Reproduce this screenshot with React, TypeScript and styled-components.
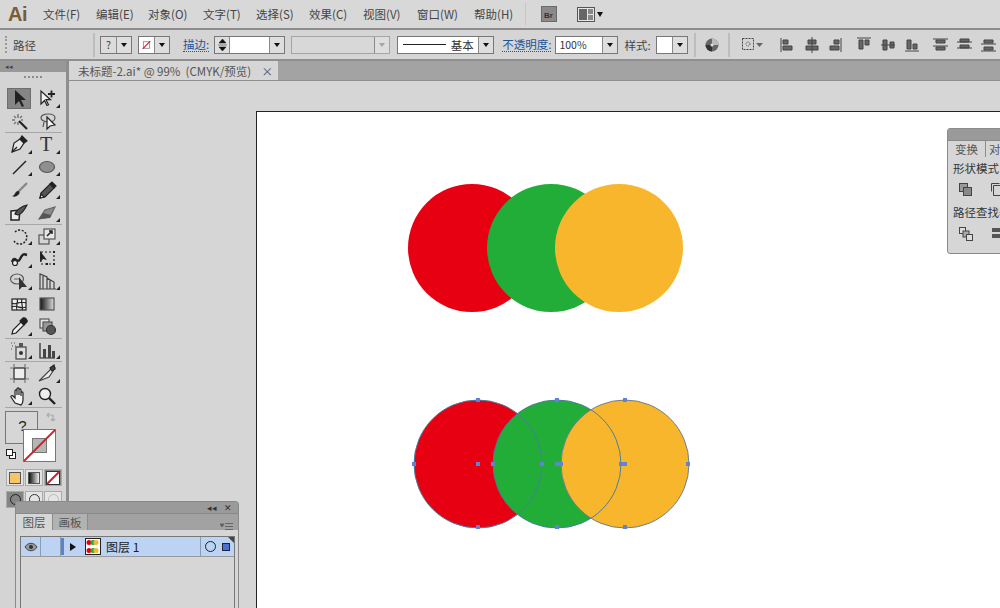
import React from "react";
import styled, { createGlobalStyle } from "styled-components";

const Global = createGlobalStyle`
  html, body { margin: 0; padding: 0; background: #d6d6d6; }
  body { font-family: "Noto Sans CJK SC", "Liberation Sans", sans-serif; color: #3c3c3c; }
`;

const Page = styled.div`
  position: relative;
  width: 1000px;
  height: 608px;
  overflow: hidden;
  display: flex;
  flex-direction: column;
`;

const MenuBar = styled.div`
  height: 28px;
  flex: none;
  display: flex;
  align-items: center;
  background: #d8d8d8;
  border-bottom: 2px solid #8c8c8c;
`;

const Logo = styled.div`
  width: 43px;
  padding-left: 8px;
  box-sizing: border-box;
  font: bold 20px "Liberation Sans", sans-serif;
  color: #7b5c38;
  letter-spacing: -0.5px;
`;

const MenuItem = styled.div<{ $w: number }>`
  width: ${(p) => p.$w}px;
  font-size: 11.5px;
  color: #444;
  white-space: nowrap;
`;

const MenuSep = styled.div`
  width: 1px;
  height: 22px;
  background: #c4c4c4;
  margin: 0 15px 0 0;
`;

const ControlBar = styled.div`
  height: 29px;
  flex: none;
  display: flex;
  align-items: center;
  background: #d5d5d5;
  border-bottom: 2px solid #8f8f8f;
  font-size: 11.5px;
`;

const Gap = styled.div<{ $w: number }>`
  width: ${(p) => p.$w}px;
  flex: none;
`;

const Grip = styled.div`
  width: 2px;
  height: 17px;
  margin-left: 5px;
  flex: none;
  border-left: 2px dotted #999;
`;

const BarLabel = styled.div<{ $link?: boolean }>`
  flex: none;
  white-space: nowrap;
  color: ${(p) => (p.$link ? "#22549c" : "#444")};
  ${(p) => p.$link && "border-bottom: 1px dotted #22549c; line-height: 14px;"}
`;

const VSep = styled.div`
  width: 2px;
  height: 24px;
  flex: none;
  background: #bdbdbd;
`;

const Combo = styled.div<{ $w: number; $off?: boolean }>`
  width: ${(p) => p.$w}px;
  height: 18px;
  flex: none;
  box-sizing: border-box;
  display: flex;
  align-items: stretch;
  background: ${(p) => (p.$off ? "#d8d8d8" : "#fff")};
  border: 1px solid ${(p) => (p.$off ? "#a5a5a5" : "#777")};
  font-size: 10.5px;
`;

const ComboBody = styled.div<{ $start?: boolean; $shade?: boolean }>`
  flex: 1;
  min-width: 0;
  display: flex;
  align-items: center;
  justify-content: ${(p) => (p.$start ? "flex-start" : "center")};
  padding: 0 3px;
  white-space: nowrap;
  color: #333;
  ${(p) => p.$shade && "background: #dcdcdc;"}
`;

const Drop = styled.div<{ $off?: boolean }>`
  width: 14px;
  flex: none;
  display: flex;
  align-items: center;
  justify-content: center;
  background: #dedede;
  border-left: 1px solid #8a8a8a;
  &::after {
    content: "";
    border-left: 3.5px solid transparent;
    border-right: 3.5px solid transparent;
    border-top: 4px solid ${(p) => (p.$off ? "#a5a5a5" : "#111")};
  }
`;

const Spin = styled.div`
  width: 14px;
  flex: none;
  background: #dedede;
  border-right: 1px solid #8a8a8a;
  display: flex;
  align-items: center;
  justify-content: center;
`;

const LineSample = styled.div`
  width: 43px;
  height: 1px;
  background: #222;
  margin-right: 5px;
  flex: none;
`;

const Basic = styled.span`
  font-size: 11.5px;
`;

const BarIcon = styled.svg`
  flex: none;
  display: block;
`;

const DocTab = styled.div`
  width: 209px;
  height: 19px;
  box-sizing: border-box;
  display: flex;
  align-items: center;
  justify-content: space-between;
  padding: 0 5px 0 9px;
  background: #d6d6d6;
  font-size: 11.5px;
  color: #555;
  white-space: pre;
`;

const Workspace = styled.div`
  flex: 1;
  min-height: 0;
  display: flex;
`;

const ToolPanel = styled.div`
  width: 69px;
  flex: none;
  box-sizing: border-box;
  background: #d4d4d4;
  border-right: 3px solid #8e8e8e;
`;

const ToolHead = styled.div`
  height: 11px;
  background: #989898;
  color: #444;
  font-size: 7px;
  line-height: 10px;
  padding-left: 5px;
`;

const ToolGrip = styled.div`
  height: 15px;
  display: flex;
  justify-content: center;
  padding-top: 4px;
  box-sizing: border-box;
  &::before {
    content: "";
    width: 18px;
    height: 2px;
    border-top: 2px dotted #8a8a8a;
  }
`;

const ToolGrid = styled.div`
  display: grid;
  grid-template-columns: 28px 28px;
  grid-auto-rows: 22.6px;
  padding-left: 5px;
`;

const ToolRule = styled.div`
  height: 1px;
  margin: 0 4px 0 5px;
  background: #a8a8a8;
`;

const Tool = styled.div<{ $on?: boolean; $more?: boolean }>`
  position: relative;
  display: flex;
  align-items: center;
  justify-content: center;
  ${(p) => p.$on && "background: #858585; box-shadow: inset 0 0 0 1px #6e6e6e; margin: 1px 2px 1px 2px;"}
  ${(p) =>
    p.$more &&
    `&::after {
      content: "";
      position: absolute;
      right: 1px;
      bottom: 2px;
      border-left: 4px solid transparent;
      border-bottom: 4px solid #222;
    }`}
`;

const Swatches = styled.div`
  position: relative;
  height: 61px;
`;

const FillBox = styled.div`
  position: absolute;
  left: 5px;
  top: 3px;
  width: 33px;
  height: 33px;
  box-sizing: border-box;
  border: 1px solid #777;
  background: #d6d6d6;
  font: 15px "Liberation Sans", sans-serif;
  text-align: center;
  padding-top: 5px;
  padding-left: 2px;
  color: #222;
`;

const StrokeBox = styled.svg`
  position: absolute;
  left: 23px;
  top: 21px;
`;

const SwapIcon = styled.svg`
  position: absolute;
  left: 46px;
  top: 4px;
`;

const DefaultIcon = styled.svg`
  position: absolute;
  left: 6px;
  top: 41px;
`;

const ModeRow = styled.div`
  display: flex;
  gap: 1px;
  margin-left: 6px;
  margin-bottom: 5px;
`;

const ModeBtn = styled.div<{ $on?: boolean }>`
  width: 18px;
  height: 17px;
  display: flex;
  align-items: center;
  justify-content: center;
  background: ${(p) => (p.$on ? "#858585" : "#e4e4e4")};
  box-shadow: inset 0 0 0 1px #aaa;
`;

const Swatch = styled.div<{ $bg: string }>`
  width: 12px;
  height: 12px;
  box-sizing: border-box;
  border: 1px solid #555;
  background: ${(p) => p.$bg};
`;

const ScreenRing = styled.div<{ $c: string }>`
  width: 9px;
  height: 9px;
  margin-bottom: 1px;
  border: 1.5px solid ${(p) => p.$c};
  border-radius: 50%;
`;

const Document = styled.div`
  flex: 1;
  min-width: 0;
  display: flex;
  flex-direction: column;
`;

const TabStrip = styled.div`
  height: 19px;
  flex: none;
  display: flex;
  background: #a3a3a3;
  border-bottom: 1px solid #8f8f8f;
`;

const Canvas = styled.div`
  flex: 1;
  min-height: 0;
  background: #d6d6d6;
  padding: 30px 0 0 187px;
`;

const Artboard = styled.div`
  height: 100%;
  background: #fff;
  border-left: 1px solid #222;
  border-top: 1px solid #222;
`;

const ArtSvg = styled.svg`
  display: block;
`;

const Panel = styled.div`
  position: absolute;
  box-sizing: border-box;
  background: #d6d6d6;
  border: 1px solid #8a8a8a;
  font-size: 11px;
`;

const LayersPanel = styled(Panel)`
  left: 15px;
  top: 501px;
  width: 224px;
  height: 120px;
  border-radius: 3px 3px 0 0;
`;

const SwatchPanel = styled(Panel)`
  left: 947px;
  top: 128px;
  width: 70px;
  height: 126px;
  border-radius: 3px 0 0 3px;
`;

const PanelHead = styled.div`
  height: 11px;
  background: #9a9a9a;
  border-bottom: 1px solid #8a8a8a;
  display: flex;
  align-items: center;
  justify-content: flex-end;
  gap: 7px;
  padding-right: 6px;
  font: 9px "Liberation Sans", sans-serif;
  color: #333;
`;

const PanelTabs = styled.div`
  height: 16px;
  display: flex;
  background: #a2a2a2;
`;

const PanelTab = styled.div<{ $on?: boolean; $w: number }>`
  width: ${(p) => p.$w}px;
  flex: none;
  display: flex;
  align-items: center;
  justify-content: center;
  background: ${(p) => (p.$on ? "#d6d6d6" : "#b2b2b2")};
  border-right: 1px solid #8c8c8c;
  box-sizing: border-box;
  color: #555;
  font-size: 11.5px;
  overflow: hidden;
  white-space: nowrap;
`;

const PanelMenu = styled.div`
  margin-left: auto;
  padding: 4px 5px 0 0;
`;

const LayerList = styled.div`
  margin: 6px 3px 0 4px;
  border: 1px solid #777;
  height: 90px;
`;

const LayerRow = styled.div`
  position: relative;
  height: 19px;
  display: flex;
  align-items: center;
  background: #bcd3f3;
  border-bottom: 1px solid #9a9a9a;
`;

const LayerCell = styled.div<{ $w: number }>`
  width: ${(p) => p.$w}px;
  flex: none;
  height: 100%;
  box-sizing: border-box;
  border-right: 1px solid #8d9bb0;
  display: flex;
  align-items: center;
  justify-content: center;
`;

const ColorBar = styled.div`
  width: 3px;
  height: 17px;
  flex: none;
  background: #5a84d0;
`;

const Expand = styled.div`
  margin-left: 6px;
  flex: none;
  border-left: 6px solid #111;
  border-top: 4px solid transparent;
  border-bottom: 4px solid transparent;
`;

const LayerName = styled.div`
  flex: 1;
  margin-left: 5px;
  font-size: 12px;
  color: #222;
  white-space: nowrap;
`;

const Target = styled.div`
  width: 34px;
  height: 100%;
  flex: none;
  box-sizing: border-box;
  border-left: 1px solid #8d9bb0;
  display: flex;
  align-items: center;
  gap: 6px;
  padding-left: 4px;
`;

const Ring = styled.div`
  width: 9px;
  height: 9px;
  border: 1px solid #222;
  border-radius: 50%;
`;

const Selected = styled.div`
  width: 6px;
  height: 6px;
  background: #4c6fd6;
  border: 1px solid #223;
`;

const Corner = styled.div`
  position: absolute;
  right: 0;
  top: 0;
  border-left: 6px solid transparent;
  border-top: 6px solid #444;
`;

const PathBody = styled.div`
  padding: 3px 0 0 5px;
  font-size: 11.5px;
  color: #333;
  white-space: nowrap;
`;

const PathRow = styled.div`
  display: flex;
  gap: 19px;
  padding: 7px 0 8px 6px;
`;

const Shape = styled.svg`
  flex: none;
  display: block;
`;

const menus: [string, number][] = [
  ["文件(F)", 53],
  ["编辑(E)", 52],
  ["对象(O)", 55],
  ["文字(T)", 53],
  ["选择(S)", 53],
  ["效果(C)", 54],
  ["视图(V)", 54],
  ["窗口(W)", 57],
  ["帮助(H)", 51],
];

const S = ({ children, w = 20, h = 20 }: { children: React.ReactNode; w?: number; h?: number }) => (
  <svg width={w} height={h} viewBox={`0 0 ${w} ${h}`} fill="none" stroke="#222" strokeWidth="1.2">
    {children}
  </svg>
);

const icons: Record<string, React.ReactNode> = {
  select: <path d="M6 2v15l4-4 3 6 2-1-3-6h5z" fill="#222" stroke="none" />,
  direct: (
    <>
      <path d="M4 3v13l3.500-3.500 2.500 5 1.500-.8-2.500-5h4.500z" fill="#f2f2f2" />
      <path d="M11 6h7M14.500 2.500v7" strokeWidth="1.800" />
    </>
  ),
  wand: (
    <>
      <path d="M10 10l8 8" strokeWidth="2.200" />
      <path d="M9 3v4M9 11v3M3 9h3M12 9h2M5 5l2 2M5 13l2-2M13 5l-2 2" stroke="#777" strokeWidth="1.500" />
    </>
  ),
  lasso: (
    <>
      <path d="M4 7c0-3 4-4 7-4s7 1 7 4-4 5-8 4-6-2-6-4zM7 11l-1 5" stroke="#555" />
      <path d="M10 6v12l3-3 5-1z" fill="#f2f2f2" />
    </>
  ),
  pen: (
    <>
      <path d="M3 18l2-9 6-4 4 4-4 6z" fill="#e6e6e6" />
      <path d="M11 5l2-3 5 5-3 2z" fill="#222" />
      <path d="M3 18l5-5" />
    </>
  ),
  type: <text x="3" y="17" fontFamily="Liberation Serif" fontSize="20" fill="#333" stroke="none">T</text>,
  line: <path d="M4 17L17 4" strokeWidth="1.500" />,
  ellipse: <ellipse cx="10" cy="10" rx="7.500" ry="5.500" fill="#8f8f8f" stroke="#555" />,
  brush: (
    <>
      <path d="M9 12L18 3" stroke="#888" strokeWidth="2.400" />
      <path d="M3 16c3 0 3-5 6-5 2 0 2 3 0 4-2 2-4 2-6 1z" fill="#222" stroke="none" />
    </>
  ),
  pencil: (
    <>
      <path d="M3 18l1-5 9-9 4 4-9 9z" fill="#555" />
      <path d="M3 18l1-4 3 3z" fill="#eee" />
      <path d="M13 4l2-2 4 4-2 2z" fill="#222" />
    </>
  ),
  blob: (
    <>
      <path d="M2 9l9-1-1 10H2z" fill="#eee" strokeWidth="1.500" />
      <path d="M6 12c1-4 7-8 12-9-2 4-5 9-9 10z" fill="#555" stroke="#222" />
    </>
  ),
  eraser: (
    <>
      <path d="M2 17l6-9 10-3-5 10z" fill="#8a8a8a" stroke="#666" />
      <path d="M2 17l4-6 8 2-1 3z" fill="#555" stroke="none" />
    </>
  ),
  rotate: <path d="M6 6a7 7 0 1 1-1 9" strokeDasharray="2 1.500" strokeWidth="1.500" />,
  scale: (
    <>
      <rect x="2" y="9" width="10" height="9" stroke="#555" />
      <rect x="7" y="3" width="11" height="10" fill="#e6e6e6" stroke="#555" />
      <path d="M10 10l5-5M12 5h3v3" strokeWidth="1.500" />
    </>
  ),
  warp: (
    <>
      <path d="M3 14c3-8 5 3 8-3s4-5 7-4" strokeWidth="2.400" />
      <circle cx="6" cy="15" r="2.500" fill="#eee" />
    </>
  ),
  free: (
    <>
      <rect x="4" y="4" width="13" height="12" strokeDasharray="2 2" />
      <path d="M3 3v11l3-3 4 1z" fill="#222" stroke="none" />
      <path d="M16 3h2v2h-2zM16 15h2v2h-2zM9 15h2v2H9z" fill="#222" stroke="none" />
    </>
  ),
  builder: (
    <>
      <ellipse cx="8" cy="8" rx="6.500" ry="5" stroke="#555" />
      <path d="M5 8h6" stroke="#777" />
      <path d="M10 6v13l3-3 5 0z" fill="#333" stroke="none" />
    </>
  ),
  perspective: <path d="M3 18V3l7 3v12M10 7l7 4v7M6 5v13M13 9v9M2 18h17" stroke="#444" />,
  mesh: (
    <>
      <rect x="3" y="5" width="14" height="11" fill="#eee" />
      <path d="M3 9c4 3 7-3 14 0M3 13c4-3 8 3 14 0M8 5c2 3-2 7 0 11M13 5c-2 4 2 7 0 11" />
    </>
  ),
  gradient: (
    <>
      <defs>
        <linearGradient id="gr">
          <stop offset="0" stopColor="#111" />
          <stop offset="1" stopColor="#ddd" />
        </linearGradient>
      </defs>
      <rect x="3" y="4" width="14" height="12" fill="url(#gr)" stroke="#555" />
    </>
  ),
  dropper: (
    <>
      <path d="M3 18l1-4 8-8 3 3-8 8z" fill="#eee" />
      <path d="M11 5l3-3c2-1 5 2 4 4l-3 3z" fill="#222" />
    </>
  ),
  blend: (
    <>
      <rect x="3" y="3" width="9" height="9" fill="#e6e6e6" stroke="#555" />
      <rect x="6" y="6" width="9" height="9" fill="#999" stroke="#555" />
      <circle cx="14" cy="14" r="4.500" fill="#555" stroke="#333" />
    </>
  ),
  spray: (
    <>
      <rect x="7" y="7" width="10" height="12" fill="#ddd" stroke="#444" />
      <rect x="10" y="3" width="4" height="4" fill="#555" stroke="none" />
      <circle cx="12" cy="13" r="2" fill="#333" stroke="none" />
      <path d="M2 3h1M5 3h1M3 6h1M6 6h1M2 9h1" strokeDasharray="1 1" stroke="#555" />
    </>
  ),
  graph: (
    <>
      <path d="M3 3v15h15" />
      <path d="M6 9h3v9H6zM11 5h3v13h-3zM15 11h3v7h-3z" fill="#444" stroke="none" />
    </>
  ),
  artboard: (
    <>
      <rect x="5" y="5" width="11" height="11" fill="#eee" />
      <path d="M5 1v3M16 1v3M5 17v3M16 17v3M1 5h3M1 16h3M17 5h3M17 16h3" stroke="#777" />
    </>
  ),
  slice: (
    <>
      <path d="M2 18L16 4l2 1-6 9z" fill="#eee" stroke="#444" />
      <path d="M13 5l4-3 1 4-3 2z" fill="#444" />
    </>
  ),
  hand: (
    <path
      d="M6 17l-4-6c-.6-1.200 1-2 2-1l2 2V5c0-1.500 2-1.500 2 0v4-6c0-1.500 2-1.500 2 0v6-5c0-1.500 2-1.500 2 0v6-3c0-1.500 2-1.500 2 0v7c0 2-1 4-2 5z"
      fill="#f4f4f4"
    />
  ),
  zoom: (
    <>
      <circle cx="8" cy="8" r="5.500" fill="#eee" strokeWidth="1.400" />
      <path d="M12 12l6 6" strokeWidth="2.400" />
    </>
  ),
};

type T = [string, boolean];
const sections: T[][] = [
  [["select", false], ["direct", true], ["wand", false], ["lasso", false]],
  [["pen", true], ["type", true], ["line", true], ["ellipse", true], ["brush", false], ["pencil", true], ["blob", false], ["eraser", true]],
  [["rotate", true], ["scale", true], ["warp", true], ["free", false], ["builder", true], ["perspective", true], ["mesh", false], ["gradient", false], ["dropper", true], ["blend", false]],
  [["spray", true], ["graph", true]],
  [["artboard", false], ["slice", true], ["hand", true], ["zoom", false]],
];

const alignIcons = [
  "M1 1v14M3 3h5v4H3zM3 9h9v4H3z",
  "M7 0v16M3 3h8v4H3zM1 9h12v4H1z",
  "M13 1v14M6 3h5v4H6zM2 9h9v4H2z",
  "M0 1h14M2 3h4v9H2zM8 3h4v5H8z",
  "M0 8h14M2 3h4v10H2zM9 5h4v6H9z",
  "M0 14h14M2 3h4v9H2zM8 7h4v5H8z",
  "M0 2h15M0 9h15M3 3h9v3H3zM3 10h9v3H3z",
  "M0 5h15M0 11h15M3 2h9v3H3zM3 8h9v3H3z",
  "M0 7h15M0 14h15M3 3h9v3H3zM3 10h9v3H3z",
];
const alignGaps = [17, 10, 8, 14, 9, 9, 13, 9, 9];

const anchors: [number, number][] = [
  [478, 400], [414, 464], [478, 464], [542, 464], [478, 527],
  [557, 400], [493, 464], [557, 464], [621, 464], [557, 527],
  [625, 400], [561, 464], [625, 464], [688, 464], [625, 527], [559, 464], [622, 464],
];

const Art = () => (
  <ArtSvg width="743" height="496" viewBox="257 112 743 496">
    <circle cx="472" cy="248" r="64" fill="#e60012" />
    <circle cx="551" cy="248" r="64" fill="#22ac38" />
    <circle cx="619" cy="248" r="64" fill="#f8b62d" />
    <circle cx="478" cy="464" r="64" fill="#e60012" />
    <circle cx="557" cy="464" r="64" fill="#22ac38" />
    <circle cx="625" cy="464" r="64" fill="#f8b62d" />
    <g fill="none" stroke="#4a7f9c" strokeWidth="1">
      <circle cx="478" cy="464" r="64" />
      <circle cx="557" cy="464" r="64" />
      <circle cx="625" cy="464" r="64" stroke="#6f7f8c" />
    </g>
    <g fill="#5f83d6">
      {anchors.map(([x, y], i) => (
        <rect key={i} x={x - 2} y={y - 2} width="4" height="4" />
      ))}
    </g>
  </ArtSvg>
);

export default function App() {
  return (
    <Page>
      <Global />
      <MenuBar>
        <Logo>Ai</Logo>
        {menus.map(([m, w]) => (
          <MenuItem key={m} $w={w}>{m}</MenuItem>
        ))}
        <MenuSep />
        <BarIcon width="16" height="16" viewBox="0 0 16 16">
          <rect x="0.500" y="0.500" width="15" height="15" fill="#8a8a8a" stroke="#6b6b6b" />
          <text x="3" y="11.500" fontSize="8" fontFamily="Liberation Sans" fontWeight="bold" fill="#333">Br</text>
        </BarIcon>
        <Gap $w={20} />
        <BarIcon width="27" height="15" viewBox="0 0 27 15">
          <rect x="0.500" y="0.500" width="17" height="14" fill="#e6e6e6" stroke="#555" />
          <rect x="2" y="2" width="8" height="11" fill="#666" />
          <rect x="11" y="2" width="5" height="5" fill="#888" />
          <rect x="11" y="8" width="5" height="5" fill="#888" />
          <path d="M20 5h6l-3 5z" fill="#111" />
        </BarIcon>
      </MenuBar>
      <ControlBar>
        <Grip />
        <Gap $w={4} />
        <BarLabel>路径</BarLabel>
        <Gap $w={57} />
        <VSep />
        <Gap $w={5} />
        <Combo $w={32}>
          <ComboBody $shade>?</ComboBody>
          <Drop />
        </Combo>
        <Gap $w={6} />
        <Combo $w={32}>
          <ComboBody>
            <svg width="14" height="14" viewBox="0 0 14 14">
              <rect x="2" y="2" width="10" height="10" fill="#fff" stroke="#666" />
              <path d="M1 13L13 1" stroke="#d0202a" strokeWidth="1.800" />
            </svg>
          </ComboBody>
          <Drop />
        </Combo>
        <Gap $w={13} />
        <BarLabel $link>描边:</BarLabel>
        <Gap $w={5} />
        <Combo $w={71}>
          <Spin>
            <svg width="9" height="12" viewBox="0 0 9 12">
              <path d="M4.500 0l3.500 4H1zM4.500 12L1 8h7zM0 6h9" fill="#111" stroke="#111" strokeWidth="0.500" />
            </svg>
          </Spin>
          <ComboBody />
          <Drop />
        </Combo>
        <Gap $w={6} />
        <Combo $w={99} $off>
          <ComboBody />
          <Drop $off />
        </Combo>
        <Gap $w={7} />
        <Combo $w={97}>
          <ComboBody>
            <LineSample />
            <Basic>基本</Basic>
          </ComboBody>
          <Drop />
        </Combo>
        <Gap $w={8} />
        <BarLabel $link>不透明度:</BarLabel>
        <Gap $w={4} />
        <Combo $w={63}>
          <ComboBody $start>100%</ComboBody>
          <Drop />
        </Combo>
        <Gap $w={6} />
        <BarLabel>样式:</BarLabel>
        <Gap $w={5} />
        <Combo $w={32}>
          <ComboBody />
          <Drop />
        </Combo>
        <Gap $w={6} />
        <VSep />
        <Gap $w={9} />
        <BarIcon width="14" height="14" viewBox="0 0 14 14">
          <circle cx="7" cy="7" r="6.500" fill="#666" />
          <path d="M7 7L7 .5A6.500 6.500 0 0 1 13.500 7z" fill="#bbb" />
          <path d="M7 7L.5 7A6.500 6.500 0 0 0 7 13.500z" fill="#333" />
          <circle cx="7" cy="7" r="1.500" fill="#ddd" />
        </BarIcon>
        <Gap $w={9} />
        <VSep />
        <Gap $w={12} />
        <BarIcon width="21" height="13" viewBox="0 0 21 13">
          <rect x="0.500" y="0.500" width="11" height="11" fill="none" stroke="#444" strokeDasharray="2 1" />
          <circle cx="6" cy="6" r="2" fill="none" stroke="#444" strokeDasharray="1 1" />
          <path d="M14 5h7l-3.500 4z" fill="#666" />
        </BarIcon>
        {alignIcons.map((d, i) => (
          <React.Fragment key={i}>
            <Gap $w={alignGaps[i]} />
            <BarIcon width="15" height="16" viewBox="0 0 15 16">
              <path d={d} fill="#666" stroke="#444" strokeWidth="1" />
            </BarIcon>
          </React.Fragment>
        ))}
      </ControlBar>
      <Workspace>
        <ToolPanel>
          <ToolHead>◂◂</ToolHead>
          <ToolGrip />
          {sections.map((sec, i) => (
            <React.Fragment key={i}>
              <ToolGrid>
                {sec.map(([name, more]) => (
                  <Tool key={name} $on={name === "select"} $more={more}>
                    <S>{icons[name]}</S>
                  </Tool>
                ))}
              </ToolGrid>
              <ToolRule />
            </React.Fragment>
          ))}
          <Swatches>
            <FillBox>?</FillBox>
            <StrokeBox width="33" height="33" viewBox="0 0 33 33">
              <rect x="0.500" y="0.500" width="32" height="32" fill="#fff" stroke="#777" />
              <rect x="9.500" y="9.500" width="14" height="14" fill="#b5b5b5" stroke="#777" />
              <path d="M1 32L32 1" stroke="#cf2027" strokeWidth="1.800" />
            </StrokeBox>
            <SwapIcon width="10" height="10" viewBox="0 0 10 10">
              <path d="M1 3h6v6M1 3l2-2M1 3l2 2M7 9L5 7M7 9l2-2" fill="none" stroke="#aaa" strokeWidth="1.200" />
            </SwapIcon>
            <DefaultIcon width="10" height="10" viewBox="0 0 10 10">
              <rect x="3.500" y="3.500" width="6" height="6" fill="#fff" stroke="#222" />
              <rect x="0.500" y="0.500" width="6" height="6" fill="#fff" stroke="#222" />
            </DefaultIcon>
          </Swatches>
          <ModeRow>
            <ModeBtn>
              <Swatch $bg="#f6c56a" />
            </ModeBtn>
            <ModeBtn>
              <Swatch $bg="linear-gradient(90deg, #111, #eee)" />
            </ModeBtn>
            <ModeBtn $on>
              <svg width="14" height="14" viewBox="0 0 14 14">
                <rect x="0.500" y="0.500" width="13" height="13" fill="#fff" stroke="#333" />
                <path d="M1 13L13 1" stroke="#cf2027" strokeWidth="2" />
              </svg>
            </ModeBtn>
          </ModeRow>
          <ModeRow>
            <ModeBtn $on>
              <ScreenRing $c="#222" />
            </ModeBtn>
            <ModeBtn>
              <ScreenRing $c="#333" />
            </ModeBtn>
            <ModeBtn>
              <ScreenRing $c="#bbb" />
            </ModeBtn>
          </ModeRow>
        </ToolPanel>
        <Document>
          <TabStrip>
            <DocTab>
              {"未标题-2.ai* @ 99%  (CMYK/预览)"}
              <span>×</span>
            </DocTab>
          </TabStrip>
          <Canvas>
            <Artboard>
              <Art />
            </Artboard>
          </Canvas>
        </Document>
      </Workspace>

      <LayersPanel>
        <PanelHead>
          <span>◂◂</span>
          <span>✕</span>
        </PanelHead>
        <PanelTabs>
          <PanelTab $on $w={37}>图层</PanelTab>
          <PanelTab $w={35}>画板</PanelTab>
          <PanelMenu>
            <svg width="13" height="8" viewBox="0 0 13 8">
              <path d="M0 1h4L2 4zM5 .5h8M5 3.500h8M5 6.500h8" fill="#555" stroke="#666" />
            </svg>
          </PanelMenu>
        </PanelTabs>
        <LayerList>
          <LayerRow>
            <LayerCell $w={20}>
              <svg width="14" height="10" viewBox="0 0 14 10">
                <path d="M1 5c3-5 9-5 12 0-3 5-9 5-12 0z" fill="#999" stroke="#444" />
                <circle cx="7" cy="5" r="2" fill="#333" />
              </svg>
            </LayerCell>
            <LayerCell $w={20} />
            <ColorBar />
            <Expand />
            <Gap $w={9} />
            <svg width="16" height="17" viewBox="0 0 16 17">
              <rect x="0.500" y="0.500" width="15" height="16" fill="#fff" stroke="#222" />
              <circle cx="4" cy="4.500" r="2.500" fill="#e60012" />
              <circle cx="8" cy="4.500" r="2.500" fill="#22ac38" />
              <circle cx="11" cy="4.500" r="2.500" fill="#f8b62d" />
              <circle cx="4" cy="12.500" r="2.500" fill="#e60012" />
              <circle cx="8" cy="12.500" r="2.500" fill="#22ac38" />
              <circle cx="11" cy="12.500" r="2.500" fill="#f8b62d" />
            </svg>
            <LayerName>图层 1</LayerName>
            <Target>
              <Ring />
              <Selected />
            </Target>
            <Corner />
          </LayerRow>
        </LayerList>
      </LayersPanel>

      <SwatchPanel>
        <PanelHead />
        <PanelTabs>
          <PanelTab $on $w={38}>变换</PanelTab>
          <PanelTab $on $w={30}>对齐</PanelTab>
        </PanelTabs>
        <PathBody>
          形状模式
          <PathRow>
            <Shape width="13" height="13" viewBox="0 0 13 13">
              <rect x="0.500" y="0.500" width="8" height="8" fill="#999" stroke="#444" />
              <rect x="4.500" y="4.500" width="8" height="8" fill="#888" stroke="#444" />
            </Shape>
            <Shape width="13" height="13" viewBox="0 0 13 13">
              <path d="M.5 8.500v-8h8M2.500 2.500h10v10h-10z" fill="none" stroke="#444" />
            </Shape>
          </PathRow>
          路径查找器
          <PathRow>
            <Shape width="14" height="14" viewBox="0 0 14 14">
              <rect x="0.500" y="0.500" width="6" height="6" fill="#ddd" stroke="#444" />
              <rect x="4" y="4" width="6" height="6" fill="#aaa" stroke="#444" />
              <rect x="7.500" y="7.500" width="6" height="6" fill="#ddd" stroke="#444" />
            </Shape>
            <Shape width="13" height="13" viewBox="0 0 13 13">
              <path d="M0 1h12v4H0zM0 7h12v4H0z" fill="#555" />
            </Shape>
          </PathRow>
        </PathBody>
      </SwatchPanel>
    </Page>
  );
}
